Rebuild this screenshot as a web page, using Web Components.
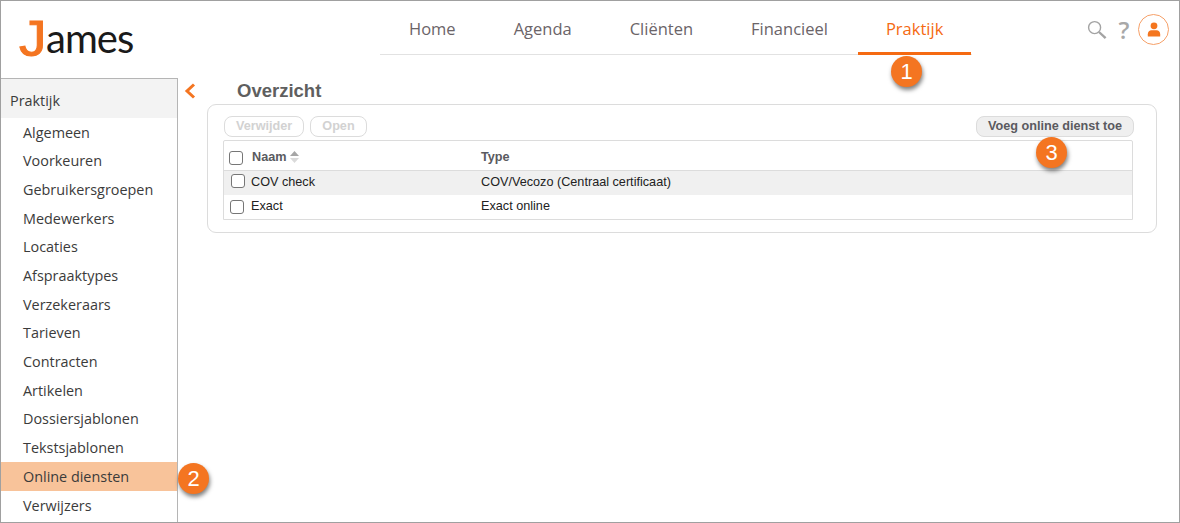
<!DOCTYPE html>
<html lang="nl">
<head>
<meta charset="utf-8">
<title>James - Online diensten</title>
<style>
  html, body { margin: 0; padding: 0; background: #fff; }
</style>
</head>
<body>
<james-app></james-app>

<script>
const navLabels = ["Home", "Agenda", "Cliënten", "Financieel", "Praktijk"];
const sideLabels = ["Algemeen", "Voorkeuren", "Gebruikersgroepen", "Medewerkers", "Locaties", "Afspraaktypes",
  "Verzekeraars", "Tarieven", "Contracten", "Artikelen", "Dossiersjablonen", "Tekstsjablonen", "Online diensten", "Verwijzers"];

// numbered callout that lies over the screenshot
class StepBadge extends HTMLElement {
  constructor() {
    super();
    this.attachShadow({ mode: "open" }).innerHTML = `
      <style>
        :host {
          position: absolute;
          left: var(--x);
          top: var(--y);
          width: 31px;
          height: 31px;
          border-radius: 50%;
          background: #f47521;
          box-shadow: 1px 3px 4px rgba(0, 0, 0, .5);
          color: #fff;
          font: 22px/31px "Liberation Sans", sans-serif;
          text-align: center;
        }
      </style>
      <slot></slot>`;
  }
}
customElements.define("step-badge", StepBadge);

class JamesLogo extends HTMLElement {
  constructor() {
    super();
    this.attachShadow({ mode: "open" }).innerHTML = `
      <style>
        :host { display: flex; align-items: baseline; height: 60px; line-height: 60px; color: #1a1a1a; }
        .j {
          display: inline-block;
          width: 27px;
          font: 400 50px/60px "Liberation Sans", sans-serif;
          color: #f47521;
          -webkit-text-stroke: 1px #f47521;
          transform: scaleX(1.1);
          transform-origin: left;
        }
        .rest { font: 400 40px/60px Lato, sans-serif; letter-spacing: -1px; transform: translateY(-3px); }
      </style>
      <span class="j">J</span><span class="rest">ames</span>`;
  }
}
customElements.define("james-logo", JamesLogo);

class TopNav extends HTMLElement {
  constructor() {
    super();
    const links = navLabels.map(l => `<a class="${l === "Praktijk" ? "on" : ""}">${l}</a>`).join("");
    this.attachShadow({ mode: "open" }).innerHTML = `
      <style>
        :host { display: flex; height: 53px; border-bottom: 1px solid #e2e2e2; }
        a {
          display: block;
          box-sizing: border-box;
          height: 53px;
          padding: 16px 29px 0;
          font: 16.500px/24px "Open Sans", sans-serif;
          color: #6b6468;
        }
        a.on { color: #f56a12; border-bottom: 3px solid #f56a12; height: 54px; margin: 0 1px; padding: 16px 28px 0; }
      </style>
      ${links}`;
  }
}
customElements.define("top-nav", TopNav);

class HeaderTools extends HTMLElement {
  constructor() {
    super();
    this.attachShadow({ mode: "open" }).innerHTML = `
      <style>
        :host { display: flex; align-items: center; }
        svg { display: block; }
        .help { font: 600 24px/30px "Open Sans", sans-serif; color: #a8a8a8; margin: 0 7px 0 10px; width: 14px; text-align: center; }
        .user { width: 31px; height: 31px; box-sizing: border-box; border: 1.5px solid #f6a068; border-radius: 50%; display: flex; align-items: center; justify-content: center; }
      </style>
      <svg width="20" height="20" viewBox="0 0 20 20" fill="none" stroke="#a3a3a3">
        <circle cx="7.6" cy="7.6" r="6" stroke-width="1.4"/>
        <path d="M12 12l6.6 6.2" stroke-width="2.4"/>
      </svg>
      <span class="help">?</span>
      <span class="user">
        <svg width="14" height="15" viewBox="0 0 14 15" fill="#f4761f">
          <circle cx="7" cy="3.800" r="3.400"/>
          <path d="M.8 14.600v-2.400c0-2.500 1.800-4 3.600-4h5.200c1.800 0 3.600 1.500 3.600 4v2.400z"/>
        </svg>
      </span>`;
  }
}
customElements.define("header-tools", HeaderTools);

class SideMenu extends HTMLElement {
  constructor() {
    super();
    const rows = sideLabels.map(l => `<div class="row ${l === "Online diensten" ? "on" : ""}">${l}</div>`).join("");
    this.attachShadow({ mode: "open" }).innerHTML = `
      <style>
        :host {
          display: block;
          width: 177px;
          box-sizing: border-box;
          border-top: 1px solid #b5b5b5;
          border-right: 1px solid #b5b5b5;
          font: 14.400px/20px "Open Sans", sans-serif;
          color: #3b3b3b;
          overflow: hidden;
        }
        .head { height: 38.500px; padding: 12px 0 0 9px; box-sizing: border-box; background: #f3f3f3; }
        .row { height: 28.700px; line-height: 30.800px; padding-left: 22px; }
        .on { background: #f8c39a; height: 29px; }
      </style>
      <div class="head">Praktijk</div>
      ${rows}`;
  }
}
customElements.define("side-menu", SideMenu);

class PillButton extends HTMLElement {
  constructor() {
    super();
    this.attachShadow({ mode: "open" }).innerHTML = `
      <style>
        :host {
          display: block;
          height: 21px;
          box-sizing: border-box;
          padding: 0 11px;
          border: 1px solid #dcdcdc;
          border-radius: 8px;
          font: bold 12.670px/19px "Liberation Sans", sans-serif;
          color: #d2d2d2;
        }
        :host([primary]) { background: #efefef; color: #5a5a60; }
      </style>
      <slot></slot>`;
  }
}
customElements.define("pill-button", PillButton);

class TickBox extends HTMLElement {
  constructor() {
    super();
    this.attachShadow({ mode: "open" }).innerHTML = `
      <style>
        :host {
          display: block;
          flex: none;
          width: 14px;
          height: 14px;
          box-sizing: border-box;
          border: 1px solid #767676;
          border-radius: 3px;
          background: #fff;
        }
      </style>`;
  }
}
customElements.define("tick-box", TickBox);

class ServiceTable extends HTMLElement {
  constructor() {
    super();
    this.attachShadow({ mode: "open" }).innerHTML = `
      <style>
        :host {
          display: block;
          box-sizing: border-box;
          height: 80px;
          border: 1px solid #dcdcdc;
          border-radius: 2px 2px 0 0;
          font: 12.670px/14px "Liberation Sans", sans-serif;
          color: #222;
        }
        .row { display: grid; grid-template-columns: 257px 1fr; align-items: center; height: 24px; box-sizing: border-box; padding-bottom: 2px; }
        .row > div { display: flex; align-items: center; }
        .head { height: 30px; padding-bottom: 0; padding-top: 2px; border-bottom: 1px solid #dcdcdc; font-weight: bold; color: #5a5a60; }
        .shade { background: #f0f0f0; }
        tick-box { margin: 0 6px 2px 7px; }
        .exact tick-box { margin: 1px 7px 0 6px; }
        .head tick-box { margin: 2px 9px 0 5px; }
        svg { margin-left: 4px; }
      </style>
      <div class="row head">
        <div><tick-box></tick-box>Naam<svg width="9" height="12" viewBox="0 0 9 12"><path d="M4.500 0L9 5H0z" fill="#a6a6a6"/><path d="M0 7h9l-4.500 5z" fill="#dadada"/></svg></div>
        <div>Type</div>
      </div>
      <div class="row shade"><div><tick-box></tick-box>COV check</div><div>COV/Vecozo (Centraal certificaat)</div></div>
      <div class="row exact"><div><tick-box></tick-box>Exact</div><div>Exact online</div></div>`;
  }
}
customElements.define("service-table", ServiceTable);

class OverviewPanel extends HTMLElement {
  constructor() {
    super();
    this.attachShadow({ mode: "open" }).innerHTML = `
      <style>
        :host { display: block; flex: 1; min-width: 0; padding: 0 22px 0 6px; }
        .top { display: flex; align-items: center; height: 26px; }
        .back { width: 12px; margin-right: 41px; display: block; }
        h1 { margin: 0; font: bold 18.500px/24px "Liberation Sans", sans-serif; color: #5f5f5f; }
        .card {
          margin: 0 0 0 23px;
          height: 129px;
          box-sizing: border-box;
          padding: 11px 23px 0 15px;
          border: 1px solid #dcdcdc;
          border-radius: 9px;
        }
        .bar { display: flex; gap: 6px; margin: 0 -1px 3px 1px; }
        .bar pill-button[primary] { margin-left: auto; }
      </style>
      <div class="top">
        <svg class="back" width="12" height="16" viewBox="0 0 12 16" fill="none" stroke="#f47521" stroke-width="3"><path d="M10 1.500L3 8l7 6.500"/></svg>
        <h1>Overzicht</h1>
      </div>
      <div class="card">
        <div class="bar">
          <pill-button>Verwijder</pill-button>
          <pill-button>Open</pill-button>
          <pill-button primary>Voeg online dienst toe</pill-button>
        </div>
        <service-table></service-table>
      </div>`;
  }
}
customElements.define("overview-panel", OverviewPanel);

class JamesApp extends HTMLElement {
  constructor() {
    super();
    this.attachShadow({ mode: "open" }).innerHTML = `
      <style>
        :host {
          display: flex;
          flex-direction: column;
          position: relative;
          width: 1180px;
          height: 523px;
          box-sizing: border-box;
          border: 1px solid #a0a0a0;
          overflow: hidden;
          background: #fff;
        }
        header { display: flex; height: 77px; flex: none; }
        james-logo { margin: 8px 0 0 18px; width: 361px; box-sizing: border-box; }
        top-nav { align-self: flex-start; }
        header-tools { margin: 13px 0 0 auto; align-self: flex-start; padding-right: 10px; }
        .body { display: flex; flex: 1; min-height: 0; }
        step-badge:nth-of-type(1) { --x: 890px; --y: 55px; }
        step-badge:nth-of-type(2) { --x: 177px; --y: 462px; }
        step-badge:nth-of-type(3) { --x: 1035px; --y: 136px; }
      </style>
      <header>
        <james-logo></james-logo>
        <top-nav></top-nav>
        <header-tools></header-tools>
      </header>
      <div class="body">
        <side-menu></side-menu>
        <overview-panel></overview-panel>
      </div>
      <step-badge>1</step-badge>
      <step-badge>2</step-badge>
      <step-badge>3</step-badge>`;
  }
}
customElements.define("james-app", JamesApp);
</script>
</body>
</html>
